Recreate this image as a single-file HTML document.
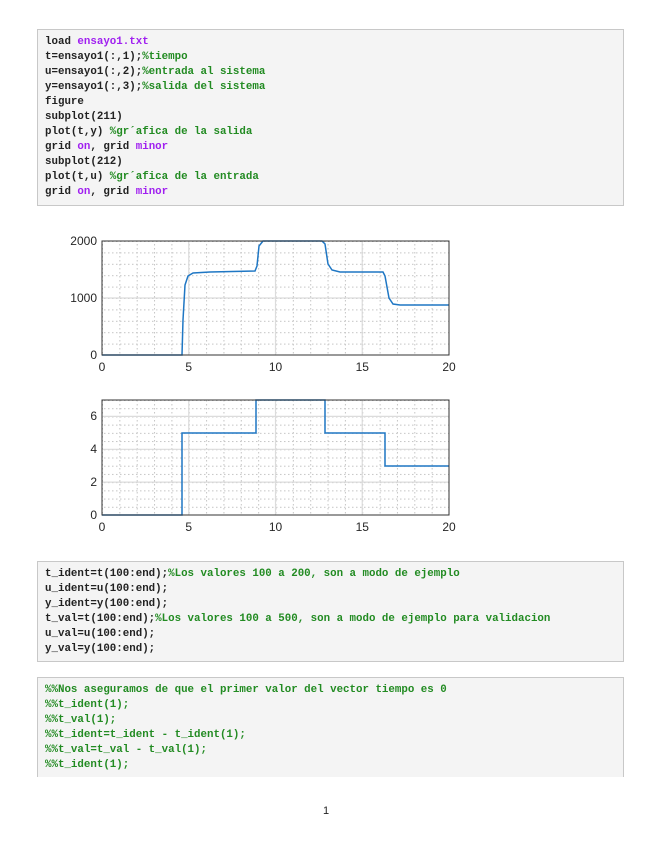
<!DOCTYPE html>
<html><head><meta charset="utf-8"><style>
body{margin:0;width:655px;height:848px;background:#fff;position:relative;overflow:hidden;font-family:"Liberation Mono",monospace}
.box{position:absolute;left:37px;width:587px;background:#f4f4f4;border:1px solid #c8c8c8;box-sizing:border-box}
.box pre{margin:0;padding:5px 0 0 7px;font:bold 10.8px/15px "Liberation Mono",monospace;color:#222}
.g{color:#228b22}.p{color:#a020f0}
</style></head><body>
<div class="box" style="top:29px;height:177px"><pre>load <span class="p">ensayo1.txt</span>
t=ensayo1(:,1);<span class="g">%tiempo</span>
u=ensayo1(:,2);<span class="g">%entrada al sistema</span>
y=ensayo1(:,3);<span class="g">%salida del sistema</span>
figure
subplot(211)
plot(t,y) <span class="g">%gr´afica de la salida</span>
grid <span class="p">on</span>, grid <span class="p">minor</span>
subplot(212)
plot(t,u) <span class="g">%gr´afica de la entrada</span>
grid <span class="p">on</span>, grid <span class="p">minor</span></pre></div>

<div class="box" style="top:561px;height:101px"><pre>t_ident=t(100:end);<span class="g">%Los valores 100 a 200, son a modo de ejemplo</span>
u_ident=u(100:end);
y_ident=y(100:end);
t_val=t(100:end);<span class="g">%Los valores 100 a 500, son a modo de ejemplo para validacion</span>
u_val=u(100:end);
y_val=y(100:end);</pre></div>

<div class="box" style="top:677px;height:100px;border-bottom:none"><pre class="g" style="color:#228b22">%%Nos aseguramos de que el primer valor del vector tiempo es 0
%%t_ident(1);
%%t_val(1);
%%t_ident=t_ident - t_ident(1);
%%t_val=t_val - t_val(1);
%%t_ident(1);</pre></div>

<svg width="655" height="848" style="position:absolute;left:0;top:0" font-family="Liberation Sans,sans-serif" font-size="12" fill="#262626">
<defs>
<pattern id="vx" x="102" y="0" width="17.35" height="4" patternUnits="userSpaceOnUse"><line x1="0.5" y1="0" x2="0.5" y2="1.5" stroke="#c4c4c4" stroke-width="1"/></pattern>
<pattern id="hy1" x="0" y="355" width="4" height="11.4" patternUnits="userSpaceOnUse"><line x1="0" y1="0.5" x2="1.5" y2="0.5" stroke="#c4c4c4"/></pattern>
<pattern id="hy2" x="0" y="515" width="4" height="8.214" patternUnits="userSpaceOnUse"><line x1="0" y1="0.5" x2="1.5" y2="0.5" stroke="#c4c4c4"/></pattern>
</defs>
<!-- plot1 -->
<rect x="102" y="241" width="347" height="114" fill="#fff"/>
<rect x="102" y="241" width="347" height="114" fill="url(#vx)"/>
<rect x="102" y="241" width="347" height="114" fill="url(#hy1)"/>
<g stroke="#dcdcdc" stroke-width="1.2">
<line x1="188.75" y1="241" x2="188.75" y2="355"/><line x1="275.5" y1="241" x2="275.5" y2="355"/><line x1="362.25" y1="241" x2="362.25" y2="355"/><line x1="102" y1="298" x2="449" y2="298"/></g>
<polyline fill="none" stroke="#1f77c4" stroke-width="1.5" points="102,355 182,355 183,320 185,285 188,276 193,273 210,272 255,271 257,266 259,246 263,241 300,241 322,241 325,244 328,264 332,270 340,272 383,272 385,276 389,298 393,304 400,305 449,305"/>
<rect x="102" y="241" width="347" height="114" fill="none" stroke="#333" stroke-width="1"/>
<g text-anchor="end"><text x="97" y="245">2000</text><text x="97" y="302">1000</text><text x="97" y="359">0</text></g>
<g text-anchor="middle"><text x="102" y="371">0</text><text x="188.75" y="371">5</text><text x="275.5" y="371">10</text><text x="362.25" y="371">15</text><text x="449" y="371">20</text></g>
<!-- plot2 -->
<rect x="102" y="400" width="347" height="115" fill="#fff"/>
<rect x="102" y="400" width="347" height="115" fill="url(#vx)"/>
<rect x="102" y="400" width="347" height="115" fill="url(#hy2)"/>
<g stroke="#dcdcdc" stroke-width="1.2">
<line x1="188.75" y1="400" x2="188.75" y2="515"/><line x1="275.5" y1="400" x2="275.5" y2="515"/><line x1="362.25" y1="400" x2="362.25" y2="515"/><line x1="102" y1="482.1" x2="449" y2="482.1"/><line x1="102" y1="449.3" x2="449" y2="449.3"/><line x1="102" y1="416.4" x2="449" y2="416.4"/></g>
<polyline fill="none" stroke="#1f77c4" stroke-width="1.5" points="102,515 182,515 182,433 256,433 256,400 325,400 325,433 385,433 385,466 449,466"/>
<rect x="102" y="400" width="347" height="115" fill="none" stroke="#333" stroke-width="1"/>
<g text-anchor="end"><text x="97" y="420">6</text><text x="97" y="453">4</text><text x="97" y="486">2</text><text x="97" y="519">0</text></g>
<g text-anchor="middle"><text x="102" y="531">0</text><text x="188.75" y="531">5</text><text x="275.5" y="531">10</text><text x="362.25" y="531">15</text><text x="449" y="531">20</text></g>
<text x="326" y="814" text-anchor="middle" fill="#222" font-size="11">1</text>
</svg>
</body></html>
